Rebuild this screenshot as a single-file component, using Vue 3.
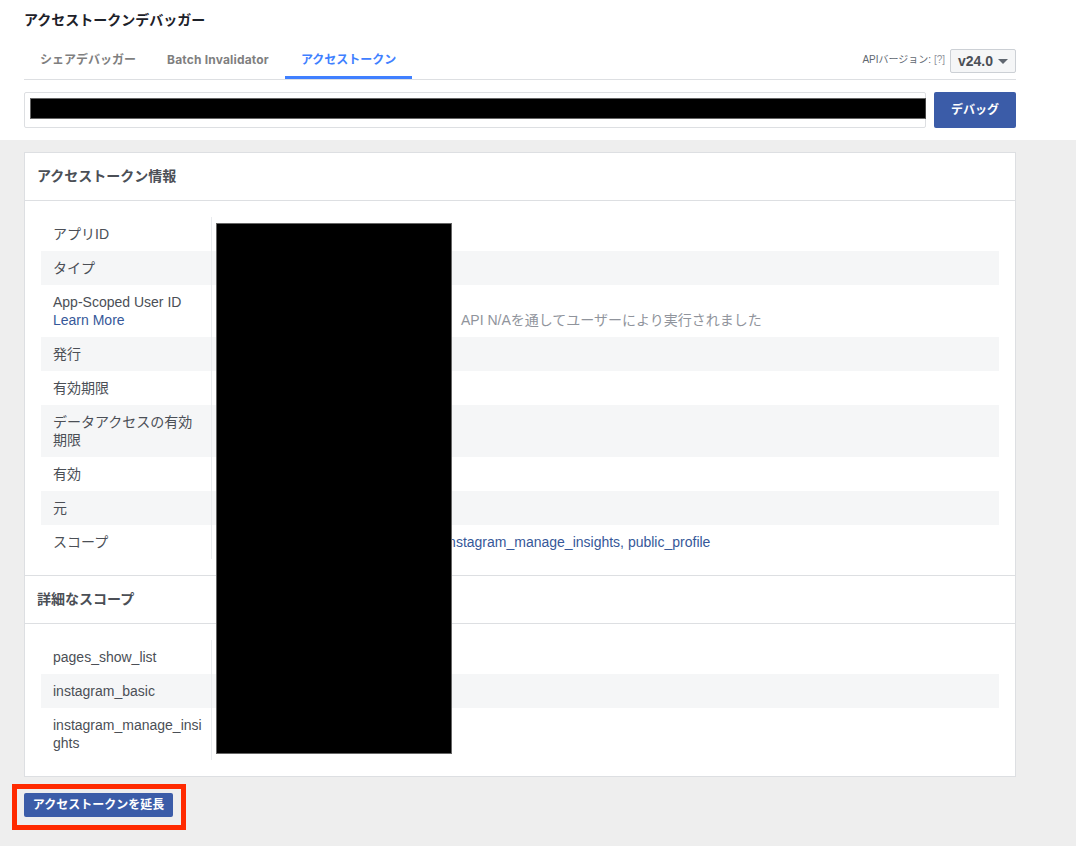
<template>
  <div class="page">
    <section class="top">
      <h1 class="title">アクセストークンデバッガー</h1>
      <div class="tabs">
        <a
          v-for="tab in tabs"
          :key="tab"
          class="tab"
          :class="{ active: tab === activeTab, latin: tab === 'Batch Invalidator' }"
        >{{ tab }}</a>
        <div class="version">
          <span class="version-label">APIバージョン: <span class="help">[?]</span></span>
          <button class="version-btn">
            v24.0
            <svg class="caret" width="10" height="5" viewBox="0 0 10 5"><path d="M0 0h10L5 5z" fill="#606770" /></svg>
          </button>
        </div>
      </div>
      <div class="token-row">
        <div class="token-box">
          <div class="token-hidden"></div>
        </div>
        <button class="debug-btn">デバッグ</button>
      </div>
    </section>

    <section class="content">
      <div class="card">
        <h2 class="card-head">アクセストークン情報</h2>
        <div class="table">
          <div v-for="row in infoRows" :key="row.label" class="row">
            <div class="label">
              {{ row.label }}
              <a v-if="row.link" class="link block">{{ row.link }}</a>
            </div>
            <div class="value" :class="row.kind">{{ row.value }}</div>
          </div>
        </div>

        <h2 class="card-head second">詳細なスコープ</h2>
        <div class="table">
          <div v-for="name in scopes" :key="name" class="row">
            <div class="label">{{ name }}</div>
            <div class="value"></div>
          </div>
        </div>

        <!-- redacted block in the screenshot -->
        <div class="redaction"></div>
      </div>

      <div class="extend-wrap">
        <button class="extend-btn">アクセストークンを延長</button>
        <div class="highlight"></div>
      </div>
    </section>
  </div>
</template>

<script setup>
const activeTab = 'アクセストークン';
const tabs = ['シェアデバッガー', 'Batch Invalidator', 'アクセストークン'];

const infoRows = [
  { label: 'アプリID' },
  { label: 'タイプ' },
  {
    label: 'App-Scoped User ID',
    link: 'Learn More',
    value: 'API N/Aを通してユーザーにより実行されました',
    kind: 'note',
  },
  { label: '発行' },
  { label: '有効期限' },
  { label: 'データアクセスの有効期限' },
  { label: '有効' },
  { label: '元' },
  {
    label: 'スコープ',
    value: 'pages_show_list, instagram_basic, instagram_manage_insights, public_profile',
    kind: 'scope',
  },
];

const scopes = ['pages_show_list', 'instagram_basic', 'instagram_manage_insights'];
</script>

<style>
html,
body {
  margin: 0;
  background: #eeeeee;
}
</style>

<style scoped>
.page {
  min-height: 846px;
  font-family: "Liberation Sans", "Noto Sans CJK JP", sans-serif;
  font-size: 14px;
  line-height: 18px;
  color: #4b4f56;
}

.top {
  height: 140px;
  box-sizing: border-box;
  padding: 12px 60px 0 24px;
  background: #fff;
}

.title {
  margin: 0;
  font-size: 14px;
  line-height: 16px;
  font-weight: 700;
  color: #1d2129;
}

.tabs {
  display: flex;
  align-items: flex-end;
  height: 51px;
  border-bottom: 1px solid #dddfe2;
}

.tab {
  box-sizing: border-box;
  height: 40px;
  padding: 2px 16px 0;
  font-family: Inter, "Noto Sans CJK JP", sans-serif;
  font-size: 12px;
  font-weight: 700;
  line-height: 38px;
  color: #7f7f7f;
  border-bottom: 3px solid transparent;
}

.tab.latin {
  margin-left: -1px;
  letter-spacing: 0.18px;
}

.tab.active {
  color: #4080ff;
  border-bottom-color: #4080ff;
}

.version {
  display: flex;
  align-items: center;
  gap: 5px;
  margin-left: auto;
  padding-bottom: 6px;
}

.version-label {
  padding-bottom: 2px;
  font-size: 10px;
  color: #606770;
}

.help {
  color: #90949c;
}

.version-btn {
  display: flex;
  align-items: center;
  justify-content: center;
  gap: 5px;
  box-sizing: border-box;
  width: 66px;
  height: 24px;
  padding: 0;
  font: inherit;
  font-size: 14px;
  font-weight: 700;
  color: #4b4f56;
  background: #f5f6f7;
  border: 1px solid #ccd0d5;
  border-radius: 2px;
}

.token-row {
  display: flex;
  gap: 8px;
  margin-top: 12px;
}

.token-box {
  flex: 1;
  box-sizing: border-box;
  height: 36px;
  padding: 5px 0 8px 5px;
  background: #fff;
  border: 1px solid #dddfe2;
  border-radius: 2px;
}

.token-hidden {
  height: 21px;
  margin-right: -1px;
  box-sizing: border-box;
  background: #000;
  border: 1px solid #666;
  border-right-color: #444;
}

.debug-btn {
  width: 82px;
  height: 36px;
  padding: 0;
  font: inherit;
  font-size: 12px;
  font-weight: 700;
  color: #fff;
  background: #3b5ca8;
  border: 0;
  border-radius: 2px;
}

.content {
  padding: 12px 60px 0 24px;
}

.card {
  position: relative;
  background: #fff;
  border: 1px solid #dddfe2;
}

.card-head {
  margin: 0;
  height: 47px;
  padding-left: 12px;
  font-size: 14px;
  font-weight: 700;
  line-height: 46px;
  color: #4b4f56;
  border-bottom: 1px solid #dddfe2;
}

.card-head.second {
  border-top: 1px solid #dddfe2;
}

.table {
  padding: 16px;
}

.row {
  display: flex;
}

.row:nth-child(even) {
  background: #f5f6f7;
}

.label {
  box-sizing: border-box;
  flex: 0 0 171px;
  padding: 8px 8px 8px 12px;
  word-break: break-all;
  border-right: 1px solid #e9ebee;
}

.block {
  display: block;
}

.link {
  color: #365899;
}

.value {
  flex: 1;
  padding: 8px 12px;
}

.value.note {
  align-self: flex-end;
  padding-left: 249px;
  color: #90949c;
}

.value.scope {
  color: #365899;
  white-space: nowrap;
}

.redaction {
  position: absolute;
  left: 191px;
  top: 70px;
  width: 236px;
  height: 531px;
  box-sizing: border-box;
  background: #000;
  border: 1px solid #666;
}

.extend-wrap {
  position: relative;
  display: flex;
  margin-top: 16px;
}

.extend-btn {
  height: 24px;
  width: 149px;
  padding: 0;
  font: inherit;
  font-size: 12px;
  font-weight: 700;
  color: #fff;
  background: #3b5ca8;
  border: 0;
  border-radius: 2px;
}

.highlight {
  position: absolute;
  left: -12px;
  top: -9px;
  width: 174px;
  height: 46px;
  box-sizing: border-box;
  border: 5px solid #ff2a00;
}
</style>
